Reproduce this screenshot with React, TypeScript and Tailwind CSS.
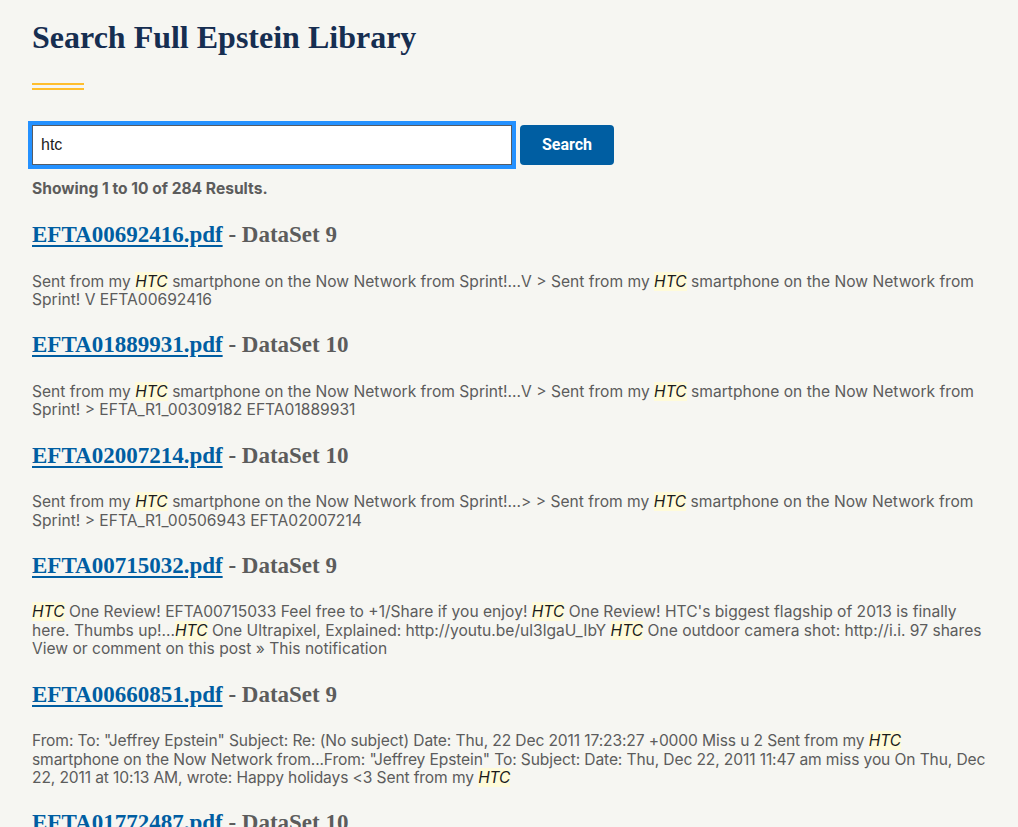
import React from "react";

type Result = {
  file: string;
  dataset: number;
  snippet: string;
  tight?: boolean;
};

const results: Result[] = [
  {
    file: "EFTA00692416.pdf",
    dataset: 9,
    snippet:
      "Sent from my [HTC] smartphone on the Now Network from Sprint!...V > Sent from my [HTC] smartphone on the Now Network from Sprint! V EFTA00692416",
  },
  {
    file: "EFTA01889931.pdf",
    dataset: 10,
    snippet:
      "Sent from my [HTC] smartphone on the Now Network from Sprint!...V > Sent from my [HTC] smartphone on the Now Network from Sprint! > EFTA_R1_00309182 EFTA01889931",
  },
  {
    file: "EFTA02007214.pdf",
    dataset: 10,
    snippet:
      "Sent from my [HTC] smartphone on the Now Network from Sprint!...> > Sent from my [HTC] smartphone on the Now Network from Sprint! > EFTA_R1_00506943 EFTA02007214",
  },
  {
    file: "EFTA00715032.pdf",
    dataset: 9,
    snippet:
      "[HTC] One Review! EFTA00715033 Feel free to +1/Share if you enjoy! [HTC] One Review! HTC's biggest flagship of 2013 is finally here. Thumbs up!...[HTC] One Ultrapixel, Explained: http://youtu.be/ul3lgaU_IbY [HTC] One outdoor camera shot: http://i.i. 97 shares View or comment on this post » This notification",
  },
  {
    file: "EFTA00660851.pdf",
    dataset: 9,
    snippet:
      'From: To: "Jeffrey Epstein" Subject: Re: (No subject) Date: Thu, 22 Dec 2011 17:23:27 +0000 Miss u 2 Sent from my [HTC] smartphone on the Now Network from...From: "Jeffrey Epstein" To: Subject: Date: Thu, Dec 22, 2011 11:47 am miss you On Thu, Dec 22, 2011 at 10:13 AM, wrote: Happy holidays <3 Sent from my [HTC]',
    tight: true,
  },
  {
    file: "EFTA01772487.pdf",
    dataset: 10,
    snippet: "",
  },
];

const serif = "font-['Liberation_Serif',serif]";

function Snippet({ text, tight }: { text: string; tight?: boolean }) {
  // split on [HTC] markers and wrap hits in a highlight
  const parts = text.split(/\[(.*?)\]/);
  return (
    <p
      className={`mt-[23.5px] font-['Inter',sans-serif] text-[15.6px] leading-[18.4px] text-[#5c5c5c] ${
        tight ? "tracking-[-0.12px]" : ""
      }`}
    >
      {parts.map((p, i) =>
        i % 2 === 1 ? (
          <mark key={i} className="bg-[#fffbd9] italic text-[#1b1b1b]">
            {p}
          </mark>
        ) : (
          <React.Fragment key={i}>{p}</React.Fragment>
        )
      )}
    </p>
  );
}

export default function App() {
  return (
    <div className="min-h-screen bg-[#f6f6f2] overflow-hidden">
      <div className="pl-[32px] pr-[32px] pt-[19px]">
        <h1 className={`${serif} text-[32px] leading-[36px] font-bold text-[#162e51]`}>
          Search Full Epstein Library
        </h1>

        {/* double gold rule */}
        <div className="mt-[28px] flex flex-col gap-[3px] w-[52px]">
          <div className="h-[2px] bg-[#ffbe2e]" />
          <div className="h-[2px] bg-[#ffbe2e]" />
        </div>

        <form className="mt-[35px] flex items-center gap-[8px]" onSubmit={(e) => e.preventDefault()}>
          <input
            type="text"
            defaultValue="htc"
            className="w-[480px] h-[40px] bg-white border border-[#565c65] px-[8px] font-['Liberation_Sans',sans-serif] text-[16px] text-[#1b1b1b] outline outline-[4px] outline-[#2491ff]"
          />
          <button
            type="submit"
            className="w-[94px] h-[40px] rounded-[4px] bg-[#005ea2] text-white font-['Roboto',sans-serif] font-bold text-[16px]"
          >
            Search
          </button>
        </form>

        <p className="mt-[15px] font-['Inter',sans-serif] font-bold text-[15.6px] leading-[18px] text-[#5c5c5c]">
          Showing 1 to 10 of 284 Results.
        </p>

        <div className="mt-[23px] flex flex-col gap-[22px]">
          {results.map((r) => (
            <div key={r.file}>
              <h2 className={`${serif} text-[23px] leading-[28px] font-bold text-[#5c5c5c]`}>
                <a href="#" className="text-[#005ea2] underline underline-offset-[3px] decoration-[2px]">
                  {r.file}
                </a>{" "}
                - DataSet {r.dataset}
              </h2>
              {r.snippet && <Snippet text={r.snippet} tight={r.tight} />}
            </div>
          ))}
        </div>
      </div>
    </div>
  );
}
